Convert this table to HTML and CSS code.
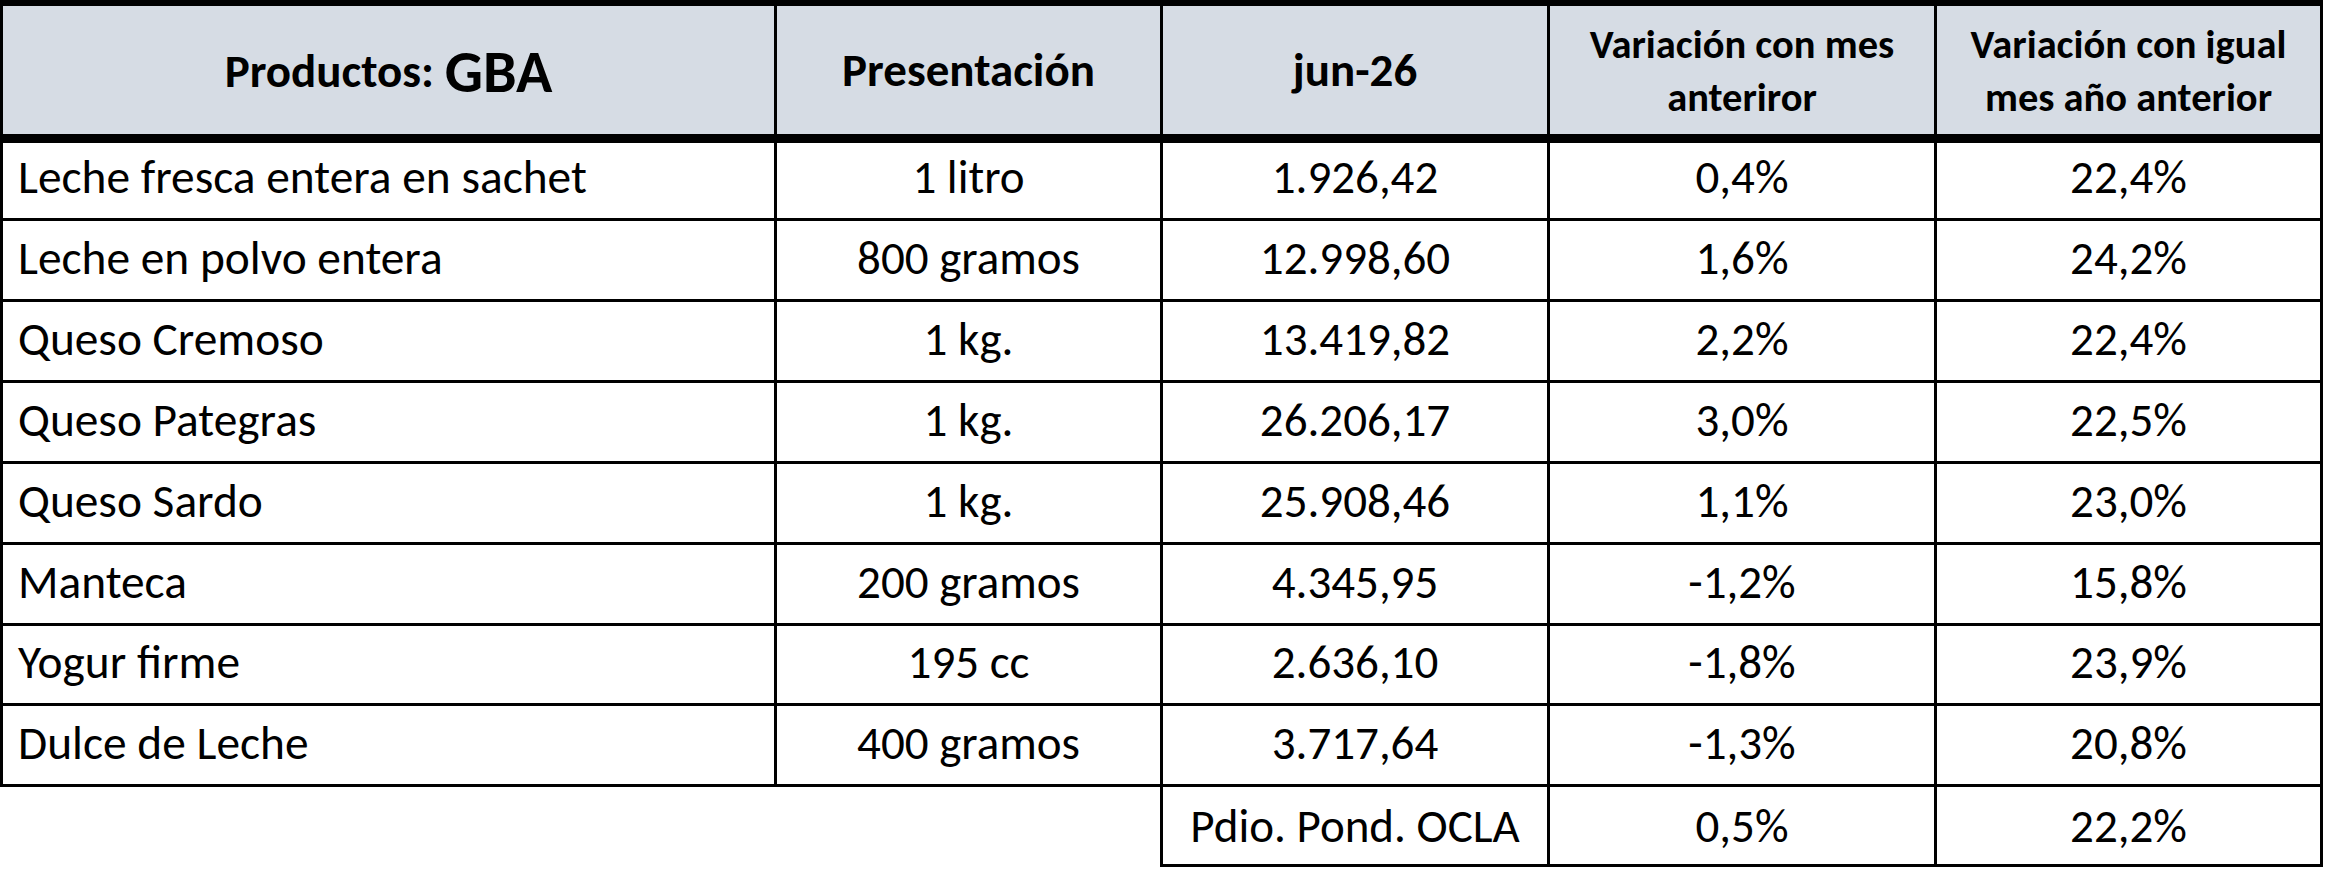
FILE: index.html
```html
<!DOCTYPE html>
<html lang="es">
<head>
<meta charset="utf-8">
<title>Precios de productos lácteos - GBA</title>
<link rel="stylesheet" href="styles.css">
</head>
<body>
<div class="sheet">
  <div class="cell hd first hd-title">Productos:&nbsp;<span class="big">GBA</span></div>
  <div class="cell hd">Presentación</div>
  <div class="cell hd">jun-26</div>
  <div class="cell hd two">Variación con mes<br>anteriror</div>
  <div class="cell hd two">Variación con igual<br>mes año anterior</div>

  <div class="cell first name">Leche fresca entera en sachet</div>
  <div class="cell">1 litro</div>
  <div class="cell">1.926,42</div>
  <div class="cell">0,4%</div>
  <div class="cell">22,4%</div>

  <div class="cell first name">Leche en polvo entera</div>
  <div class="cell">800 gramos</div>
  <div class="cell">12.998,60</div>
  <div class="cell">1,6%</div>
  <div class="cell">24,2%</div>

  <div class="cell first name">Queso Cremoso</div>
  <div class="cell">1 kg.</div>
  <div class="cell">13.419,82</div>
  <div class="cell">2,2%</div>
  <div class="cell">22,4%</div>

  <div class="cell first name">Queso Pategras</div>
  <div class="cell">1 kg.</div>
  <div class="cell">26.206,17</div>
  <div class="cell">3,0%</div>
  <div class="cell">22,5%</div>

  <div class="cell first name">Queso Sardo</div>
  <div class="cell">1 kg.</div>
  <div class="cell">25.908,46</div>
  <div class="cell">1,1%</div>
  <div class="cell">23,0%</div>

  <div class="cell first name">Manteca</div>
  <div class="cell">200 gramos</div>
  <div class="cell">4.345,95</div>
  <div class="cell">-1,2%</div>
  <div class="cell">15,8%</div>

  <div class="cell first name">Yogur firme</div>
  <div class="cell">195 cc</div>
  <div class="cell">2.636,10</div>
  <div class="cell">-1,8%</div>
  <div class="cell">23,9%</div>

  <div class="cell first name">Dulce de Leche</div>
  <div class="cell">400 gramos</div>
  <div class="cell">3.717,64</div>
  <div class="cell">-1,3%</div>
  <div class="cell">20,8%</div>

  <div class="blank"></div>
  <div class="cell sum">Pdio. Pond. OCLA</div>
  <div class="cell sum">0,5%</div>
  <div class="cell sum">22,2%</div>
</div>
</body>
</html>
```
FILE: styles.css
```css
html, body {
  margin: 0;
  padding: 0;
  background: #ffffff;
}

body {
  font-family: "Carlito", "Liberation Sans Narrow", "Liberation Sans", sans-serif;
  color: #000000;
}

.sheet {
  display: grid;
  grid-template-columns: 777px 386px 387px 387px 386px;
  grid-template-rows: 143px 78px 81px 81px 81px 81px 81px 80px 81px 80px;
  width: 2323px;
}

.cell {
  box-sizing: border-box;
  display: flex;
  align-items: flex-end;
  justify-content: center;
  border-right: 3px solid #000;
  border-bottom: 3px solid #000;
  font-size: 47px;
  line-height: 1;
  padding-bottom: 17px;
  white-space: nowrap;
}

.cell.first {
  border-left: 3px solid #000;
}

.cell.name {
  justify-content: flex-start;
  padding-left: 15px;
  font-size: 47.4px;
}

.cell.hd {
  background: #d6dce4;
  border-top: 6px solid #000;
  border-bottom: 9px solid #000;
  align-items: center;
  font-weight: 700;
  font-size: 47px;
  padding-top: 0;
  padding-bottom: 0;
  text-align: center;
}

.cell.hd-title {
  padding-top: 3px;
}

.cell.hd .big {
  font-size: 60px;
  line-height: 1;
}

.cell.hd.two {
  font-size: 40.5px;
  line-height: 53px;
  padding-top: 1px;
}

.cell.sum {
  padding-bottom: 14px;
}

.blank {
  grid-column: span 2;
  box-sizing: border-box;
  border-right: 3px solid #000;
}
```
